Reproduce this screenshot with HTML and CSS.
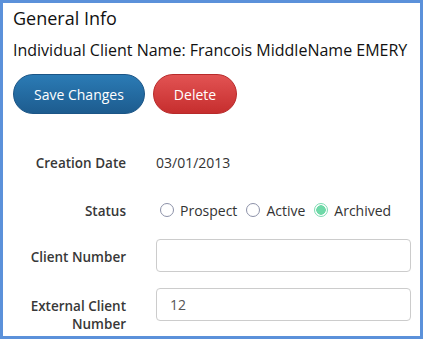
FILE: index.html
```html
<!DOCTYPE html>
<html lang="en">

<head>
  <meta charset="UTF-8">
  <meta name="viewport" content="width=device-width, initial-scale=1.0">
  <title>General Info</title>
  <link rel="stylesheet" href="styles.css">
</head>

<body>
  <div class="panel">
    <h2 class="panel-title">General Info</h2>
    <h3 class="client-name">Individual Client Name: Francois MiddleName EMERY</h3>

    <div class="actions">
      <button class="btn btn-primary">Save Changes</button>
      <button class="btn btn-danger">Delete</button>
    </div>

    <form class="form-grid">
      <label class="form-label">Creation Date</label>
      <div class="form-static">03/01/2013</div>

      <label class="form-label">Status</label>
      <div class="radio-group">
        <label class="radio-inline"><input type="radio" name="status"> Prospect</label>
        <label class="radio-inline"><input type="radio" name="status"> Active</label>
        <label class="radio-inline"><input type="radio" name="status" checked> Archived</label>
      </div>

      <label class="form-label" for="clientNumber">Client Number</label>
      <input class="form-control" id="clientNumber" type="text">

      <label class="form-label label-wide" for="externalNumber">External Client Number</label>
      <input class="form-control input-wide" id="externalNumber" type="text" value="12">
    </form>
  </div>
</body>

</html>
```

FILE: styles.css
```css
* {
  padding: 0;
  margin: 0;
  box-sizing: border-box;
  font-family: "Open Sans", "Noto Sans", sans-serif;
}

body {
  background: #fff;
}

.panel {
  width: 423px;
  height: 339px;
  border: 3px solid #5b91da;
  padding: 4px 9px 0 10px;
  overflow: hidden;
  color: #222;
}

.panel-title {
  font-size: 18px;
  font-weight: 400;
  line-height: 22px;
  color: #111;
}

.client-name {
  font-size: 16px;
  font-weight: 400;
  line-height: 20px;
  margin-top: 11px;
  color: #111;
  white-space: nowrap;
}

.actions {
  display: flex;
  gap: 8px;
  margin-top: 14px;
}

.btn {
  height: 40px;
  padding: 0 20px;
  border-radius: 20px;
  font-size: 14px;
  color: #fff;
  cursor: pointer;
}

.btn-primary {
  background: linear-gradient(#2b7bb5, #1d5c8f);
  border: 1px solid #1b5586;
}

.btn-danger {
  background: linear-gradient(#e25353, #c62e2e);
  border: 1px solid #b82a2a;
}

.form-grid {
  display: grid;
  grid-template-columns: 113px 1fr;
  column-gap: 30px;
  row-gap: 14px;
  margin-top: 31px;
}

.form-label {
  text-align: right;
  font-size: 13.5px;
  font-weight: 600;
  line-height: 18px;
  padding-top: 9px;
  color: #383838;
}

.form-static,
.radio-group {
  height: 34px;
  display: flex;
  align-items: center;
  font-size: 14px;
  color: #333;
}

.radio-group {
  gap: 9px;
  padding-left: 4px;
  margin-bottom: -2px;
}

.radio-inline {
  display: flex;
  align-items: center;
  gap: 6px;
  font-size: 14px;
  color: #333;
}

.radio-inline input {
  appearance: none;
  width: 14px;
  height: 14px;
  border: 1px solid #8c91a8;
  border-radius: 50%;
  background: #fff;
}

.radio-inline input:checked {
  border-color: #7ddcb2;
  background: radial-gradient(circle, #6fd9a8 0 4.5px, #fff 5px);
}

.form-control {
  height: 33px;
  border: 1px solid #ccc;
  border-radius: 4px;
  padding: 0 13px;
  font-size: 14px;
  color: #555;
  outline: none;
}

.label-wide,
.input-wide {
  margin-top: 2px;
}
```
